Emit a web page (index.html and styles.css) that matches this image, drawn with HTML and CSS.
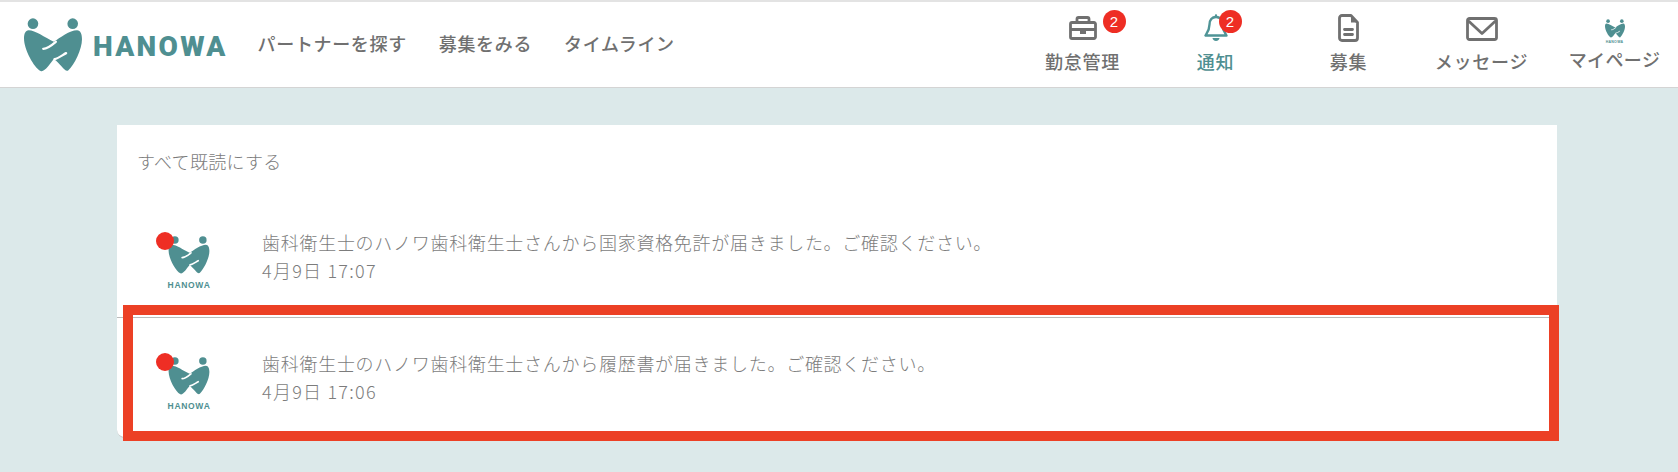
FILE: index.html
```html
<!DOCTYPE html>
<html lang="ja">
<head>
<meta charset="utf-8">
<title>HANOWA 通知</title>
<link rel="stylesheet" href="styles.css">
</head>
<body>
<svg class="defs" width="0" height="0" aria-hidden="true">
  <symbol id="mark" viewBox="0 0 175 163">
    <circle cx="27" cy="17" r="16"/>
    <circle cx="147" cy="17" r="16"/>
    <path d="M14 37C34 37 62 58 90 72C108 60 138 37 160 37C171 37 175 50 175 64C175 95 152 140 134 158C124 166 112 140 90 124C78 138 62 165 50 160C30 150 0 95 0 62C0 48 4 37 14 37Z"/>
    <path class="slit" d="M58 93C70 93 82 84 96 72"/>
    <path class="slit" d="M92 124C104 122 116 112 127 106"/>
  </symbol>
</svg>
<header class="header">
  <div class="brand">
    <svg class="brand-mark"><use href="#mark"/></svg>
    <span class="brand-name">HANOWA</span>
  </div>
  <nav class="main-nav">
    <a class="main-link">パートナーを探す</a>
    <a class="main-link">募集をみる</a>
    <a class="main-link">タイムライン</a>
  </nav>
  <nav class="icon-nav">
    <a class="icon-item">
      <span class="icon-box">
        <svg class="icon icon-case" viewBox="0 0 28 24"><path d="M3 6.500h22a1.500 1.500 0 0 1 1.500 1.500v13a1.500 1.500 0 0 1-1.500 1.500H3A1.500 1.500 0 0 1 1.500 21V8A1.500 1.500 0 0 1 3 6.500zM8 6.500V3a1.500 1.500 0 0 1 1.500-1.500h9A1.500 1.500 0 0 1 20 3v3.500M1.500 13.500h25"/><path class="solid" d="M11 13.500h6v4.500h-6z"/></svg>
        <span class="badge badge-case">2</span>
      </span>
      <span class="icon-label">勤怠管理</span>
    </a>
    <a class="icon-item is-active">
      <span class="icon-box">
        <svg class="icon icon-bell" viewBox="0 0 24 27"><path d="M12 1.500v1.500M12 3c-4 0-6.500 3-6.500 7.500 0 5.500-2.500 8.500-4 11h21c-1.500-2.500-4-5.500-4-11C18.500 6 16 3 12 3z"/><path class="solid" d="M8.500 24h7c0 1.500-1.500 3-3.500 3s-3.500-1.500-3.500-3z"/></svg>
        <span class="badge badge-bell">2</span>
      </span>
      <span class="icon-label">通知</span>
    </a>
    <a class="icon-item">
      <span class="icon-box">
        <svg class="icon icon-doc" viewBox="0 0 21 28"><path d="M4 1.500h9l6.500 7v15.500a2.500 2.500 0 0 1-2.500 2.500H4A2.500 2.500 0 0 1 1.500 24V4A2.500 2.500 0 0 1 4 1.500zM6.500 15.500h8M6.500 20.500h8"/><path class="solid" d="M13 1.500l6.500 7H13z"/></svg>
      </span>
      <span class="icon-label">募集</span>
    </a>
    <a class="icon-item">
      <span class="icon-box">
        <svg class="icon icon-mail" viewBox="0 0 32 24"><path d="M3.500 1.500h25a2 2 0 0 1 2 2v17a2 2 0 0 1-2 2h-25a2 2 0 0 1-2-2v-17a2 2 0 0 1 2-2zM2 3.500l14 13 14-13"/></svg>
      </span>
      <span class="icon-label">メッセージ</span>
    </a>
    <a class="icon-item is-profile">
      <span class="icon-box">
        <span class="logo-stack logo-mini">
          <svg class="logo-mark"><use href="#mark"/></svg>
          <span class="logo-word">HANOWA</span>
        </span>
      </span>
      <span class="icon-label">マイページ</span>
    </a>
  </nav>
</header>
<main class="page">
  <section class="card">
    <div class="card-head">すべて既読にする</div>
    <article class="notice">
      <div class="avatar">
        <span class="logo-stack">
          <svg class="logo-mark"><use href="#mark"/></svg>
          <span class="logo-word">HANOWA</span>
        </span>
        <span class="dot"></span>
      </div>
      <div class="notice-body">
        <p class="notice-text">歯科衛生士のハノワ歯科衛生士さんから国家資格免許が届きました。ご確認ください。</p>
        <p class="notice-time">4月9日 17:07</p>
      </div>
    </article>
    <article class="notice notice-ruled">
      <div class="avatar">
        <span class="logo-stack">
          <svg class="logo-mark"><use href="#mark"/></svg>
          <span class="logo-word">HANOWA</span>
        </span>
        <span class="dot"></span>
      </div>
      <div class="notice-body">
        <p class="notice-text">歯科衛生士のハノワ歯科衛生士さんから履歴書が届きました。ご確認ください。</p>
        <p class="notice-time">4月9日 17:06</p>
      </div>
    </article>
    <div class="highlight"></div>
  </section>
</main>
</body>
</html>
```

FILE: styles.css
```css
* { box-sizing: border-box; }
html, body { margin: 0; height: 100%; }
body {
  background: #dce9ea;
  color: #707070;
  font-family: "Noto Sans CJK JP", "Noto Sans", sans-serif;
  overflow: hidden;
}
.defs { position: absolute; }
symbol { fill: #4f8f91; }
.slit { fill: none; stroke: #fff; stroke-width: 7; stroke-linecap: round; }

.header {
  display: flex;
  align-items: stretch;
  height: 88px;
  background: #fff;
  border-top: 2px solid #e3e3e3;
  border-bottom: 1px solid #d4d4d4;
}
.brand {
  display: flex;
  align-items: center;
  margin-left: 24px;
  gap: 11px;
}
.brand-mark { width: 58px; height: 54px; fill: #4f8f91; }
.brand-name {
  font-family: Roboto, "Liberation Sans", sans-serif;
  font-weight: 900;
  font-size: 28px;
  letter-spacing: 2.300px;
  color: #4f8f91;
  margin-top: 4px;
}
.main-nav {
  display: flex;
  align-items: center;
  gap: 32px;
  margin-left: 30px;
  padding-bottom: 3px;
}
.main-link {
  font-size: 18px;
  font-weight: 500;
  letter-spacing: 0.650px;
}
.icon-nav {
  display: flex;
  margin-left: auto;
  margin-right: -3px;
}
.icon-item {
  position: relative;
  width: 133px;
  display: flex;
  flex-direction: column;
  align-items: center;
}
.icon-box {
  position: relative;
  height: 46px;
  padding-top: 12px;
  display: flex;
  justify-content: center;
  align-items: flex-start;
}
.icon {
  fill: none;
  stroke: #707070;
  stroke-width: 2.800;
  stroke-linejoin: round;
  stroke-linecap: round;
}
.icon .solid { fill: #707070; stroke: none; }
.icon-case { width: 28px; height: 24px; margin-top: 2px; }
.icon-bell { width: 24px; height: 27px; stroke: #4f9496; stroke-width: 2.400; }
.icon-bell .solid { fill: #4f9496; }
.icon-doc { width: 21px; height: 28px; }
.icon-mail { width: 32px; height: 24px; margin-top: 3px; }
.icon-label {
  font-size: 18px;
  font-weight: 500;
  line-height: 26px;
  letter-spacing: 0.800px;
}
.is-active .icon-label { color: #4f8f91; }
.is-profile .icon-label { margin-top: -2px; letter-spacing: 0.400px; }
.badge {
  position: absolute;
  top: 8px;
  left: 50%;
  width: 23px;
  height: 23px;
  border-radius: 50%;
  background: #ee2e24;
  color: #fff;
  font-size: 15px;
  line-height: 23px;
  text-align: center;
  font-family: "Liberation Sans", sans-serif;
}
.badge-case { margin-left: 20px; }
.badge-bell { margin-left: 3px; }

.page { padding: 37px 0 0 117px; }
.card {
  position: relative;
  width: 1440px;
  height: 313px;
  background: #fff;
  border-bottom: 1px solid #c4c4c4;
  border-radius: 0 0 0 8px;
}
.card-head {
  height: 71px;
  padding: 23px 0 0 20px;
  font-size: 18px;
  line-height: 26px;
  letter-spacing: 0.300px;
  color: #7c7c7c;
  font-weight: 300;
}
.notice {
  height: 121px;
  display: flex;
  align-items: flex-start;
  padding-left: 51px;
  gap: 52px;
}
.notice-ruled { border-top: 1px solid #bbb; }
.avatar { position: relative; width: 42px; padding-top: 40px; }
.notice-ruled .avatar { padding-top: 39px; }
.dot {
  position: absolute;
  left: -12px;
  top: 36px;
  width: 18px;
  height: 18px;
  border-radius: 50%;
  background: #ee2e24;
}
.notice-ruled .dot { top: 35px; }
.logo-stack { display: flex; flex-direction: column; align-items: center; }
.logo-mark { width: 42px; height: 38px; fill: #4f8f91; }
.logo-word {
  font-family: "Liberation Sans", sans-serif;
  font-weight: 700;
  font-size: 8.500px;
  line-height: 10px;
  letter-spacing: 0.700px;
  margin-top: 6px;
  color: #4f8f91;
}
.logo-mini { width: 20px; margin-top: 5px; }
.logo-mini .logo-mark { width: 20px; height: 19px; }
.logo-mini .logo-word { font-size: 3.500px; line-height: 4px; letter-spacing: 0.300px; margin-top: 2px; }
.notice-body { padding-top: 32px; }
.notice-ruled .notice-body { padding-top: 31px; }
.notice-text, .notice-time {
  margin: 0;
  font-size: 18px;
  line-height: 28px;
  color: #7c7c7c;
  font-weight: 300;
}
.notice-text { letter-spacing: 0.720px; }
.notice-time { letter-spacing: 1.250px; }
.highlight {
  position: absolute;
  left: 6px;
  top: 180px;
  width: 1436px;
  height: 136px;
  border: 10px solid #ec4025;
}
```
